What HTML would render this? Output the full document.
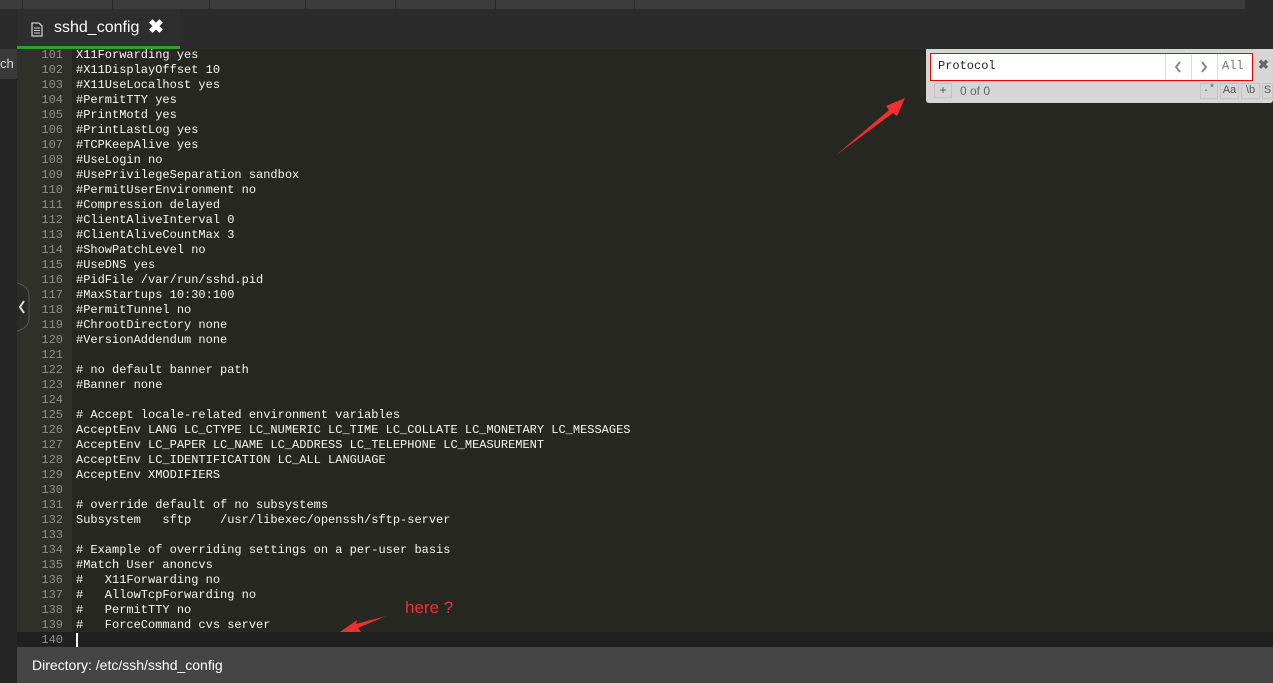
<!DOCTYPE html>
<html><head><meta charset="utf-8"><style>
*{margin:0;padding:0;box-sizing:border-box}
body{width:1273px;height:683px;overflow:hidden;background:#272822;position:relative;font-family:"Liberation Sans",sans-serif}
.top{position:absolute;left:0;top:0;width:1273px;height:9px;background:#3c3c3c}
.top i{position:absolute;top:0;width:1px;height:9px;background:#2a2a2a}
.tabbar{position:absolute;left:0;top:9px;width:1273px;height:40px;background:#2b2b2b}
.tab{position:absolute;left:17px;top:9px;width:163px;height:40px;background:#2e2e2e;border-bottom:3px solid #2aa12a;color:#fff;font-size:16px}
.leftbar{position:absolute;left:0;top:49px;width:17px;height:634px;background:#252526}
.ch{position:absolute;left:0;top:49px;width:17px;height:30px;background:#3a3a3a;color:#ddd;font-size:13px;line-height:30px;overflow:hidden}
.gutter{position:absolute;left:17px;top:49px;width:55px;height:598px;background:#2f3029}
.code{position:absolute;left:17px;top:48px;font-family:"Liberation Mono",monospace;font-size:12px;line-height:15px;color:#f8f8f2}
.code div{height:15px;white-space:pre}
.code span{display:inline-block;width:46px;text-align:right;color:#8f908a;margin-right:13px}
.cur{position:absolute;left:17px;top:632px;width:1256px;height:15px;background:#202020}
.status{position:absolute;left:17px;top:647px;width:1256px;height:36px;background:#454545;color:#fff;font-size:14px;line-height:36px;padding-left:15px}
.find{position:absolute;left:926px;top:49px;width:347px;height:54px;background:#d6d6d6;border-radius:0 0 3px 3px}
</style></head><body>
<div class="top"><i style="left:22px"></i><i style="left:112px"></i><i style="left:209px"></i><i style="left:305px"></i><i style="left:395px"></i><i style="left:495px"></i><i style="left:634px"></i></div>
<div style="position:absolute;left:1245px;top:0;width:28px;height:9px;background:#2b2b2b"></div>
<div class="tabbar"></div>
<div class="tab">
<svg style="position:absolute;left:14px;top:13px" width="12" height="15" viewBox="0 0 12 15"><path d="M1 1h7l3 3v10H1z" fill="none" stroke="#ccc" stroke-width="1.3"/><path d="M3 6h6M3 8.5h6M3 11h6" stroke="#ccc"/></svg>
<span style="position:absolute;left:37px;top:10px">sshd_config</span>
<span style="position:absolute;left:131px;top:7px;font-size:19px;font-weight:bold">✖</span>
</div>
<div class="leftbar"></div>
<div class="ch">ch</div>
<div class="gutter"></div>
<div class="cur"></div>
<svg style="position:absolute;left:14px;top:282px" width="20" height="50"><path d="M3 1 Q15 4 15 14 V36 Q15 46 3 49" fill="#2a2a2a" stroke="#555"/><path d="M10 19l-4 6 4 6" stroke="#ddd" stroke-width="2" fill="none"/></svg>
<div class="code"><div><span>101</span>X11Forwarding yes</div><div><span>102</span>#X11DisplayOffset 10</div><div><span>103</span>#X11UseLocalhost yes</div><div><span>104</span>#PermitTTY yes</div><div><span>105</span>#PrintMotd yes</div><div><span>106</span>#PrintLastLog yes</div><div><span>107</span>#TCPKeepAlive yes</div><div><span>108</span>#UseLogin no</div><div><span>109</span>#UsePrivilegeSeparation sandbox</div><div><span>110</span>#PermitUserEnvironment no</div><div><span>111</span>#Compression delayed</div><div><span>112</span>#ClientAliveInterval 0</div><div><span>113</span>#ClientAliveCountMax 3</div><div><span>114</span>#ShowPatchLevel no</div><div><span>115</span>#UseDNS yes</div><div><span>116</span>#PidFile /var/run/sshd.pid</div><div><span>117</span>#MaxStartups 10:30:100</div><div><span>118</span>#PermitTunnel no</div><div><span>119</span>#ChrootDirectory none</div><div><span>120</span>#VersionAddendum none</div><div><span>121</span></div><div><span>122</span># no default banner path</div><div><span>123</span>#Banner none</div><div><span>124</span></div><div><span>125</span># Accept locale-related environment variables</div><div><span>126</span>AcceptEnv LANG LC_CTYPE LC_NUMERIC LC_TIME LC_COLLATE LC_MONETARY LC_MESSAGES</div><div><span>127</span>AcceptEnv LC_PAPER LC_NAME LC_ADDRESS LC_TELEPHONE LC_MEASUREMENT</div><div><span>128</span>AcceptEnv LC_IDENTIFICATION LC_ALL LANGUAGE</div><div><span>129</span>AcceptEnv XMODIFIERS</div><div><span>130</span></div><div><span>131</span># override default of no subsystems</div><div><span>132</span>Subsystem   sftp    /usr/libexec/openssh/sftp-server</div><div><span>133</span></div><div><span>134</span># Example of overriding settings on a per-user basis</div><div><span>135</span>#Match User anoncvs</div><div><span>136</span>#   X11Forwarding no</div><div><span>137</span>#   AllowTcpForwarding no</div><div><span>138</span>#   PermitTTY no</div><div><span>139</span>#   ForceCommand cvs server</div><div><span>140</span><b style="display:inline-block;width:2px;height:15px;background:#fff;vertical-align:top"></b></div></div>
<div class="status">Directory: /etc/ssh/sshd_config</div>
<div class="find">
<div style="position:absolute;left:4px;top:4px;width:323px;height:28px;background:#fff;border:1px solid #e00"></div>
<div style="position:absolute;left:12px;top:10px;font-family:'Liberation Mono',monospace;font-size:12px;color:#222">Protocol</div>
<div style="position:absolute;left:239px;top:5px;width:1px;height:26px;background:#ddd"></div>
<div style="position:absolute;left:265px;top:5px;width:1px;height:26px;background:#ddd"></div>
<div style="position:absolute;left:291px;top:5px;width:1px;height:26px;background:#ddd"></div>
<svg style="position:absolute;left:247px;top:12px" width="10" height="12"><path d="M7 1L3 6l4 5" stroke="#888" stroke-width="2" fill="none"/></svg>
<svg style="position:absolute;left:273px;top:12px" width="10" height="12"><path d="M3 1l4 5-4 5" stroke="#888" stroke-width="2" fill="none"/></svg>
<div style="position:absolute;left:296px;top:10px;color:#777;font-family:'Liberation Mono',monospace;font-size:12px">All</div>
<div style="position:absolute;left:332px;top:8px;color:#666;font-size:13px;font-weight:bold">✖</div>
<div style="position:absolute;left:8px;top:34px;width:18px;height:15px;border:1px solid #c4c4c4;font-size:12px;text-align:center;line-height:13px;color:#555">+</div>
<div style="position:absolute;left:34px;top:35px;font-size:12px;color:#666">0 of 0</div>
<div style="position:absolute;left:274px;top:34px;width:18px;height:16px;border:1px solid #c4c4c4;font-size:10px;text-align:center;color:#555;font-family:'Liberation Mono',monospace">.*</div>
<div style="position:absolute;left:294px;top:34px;width:19px;height:16px;border:1px solid #c4c4c4;font-size:11px;text-align:center;color:#555">Aa</div>
<div style="position:absolute;left:315px;top:34px;width:19px;height:16px;border:1px solid #c4c4c4;font-size:11px;text-align:center;color:#555">\b</div>
<div style="position:absolute;left:336px;top:34px;width:11px;height:16px;border:1px solid #c4c4c4;font-size:11px;text-align:center;color:#555;overflow:hidden">S</div>
</div>
<svg style="position:absolute;left:0;top:0" width="1273" height="683">
<path d="M835 156 L889 110 L886 106 L905 98 L897 116 L893 113 Z" fill="#f03030"/>
<path d="M386 616 L356 624 L357 620 L340 632 L361 632 L358 628 Z" fill="#f03030"/>
<text x="405" y="613" fill="#f03030" font-family="Liberation Sans" font-size="17">here ?</text>
</svg>
</body></html>
